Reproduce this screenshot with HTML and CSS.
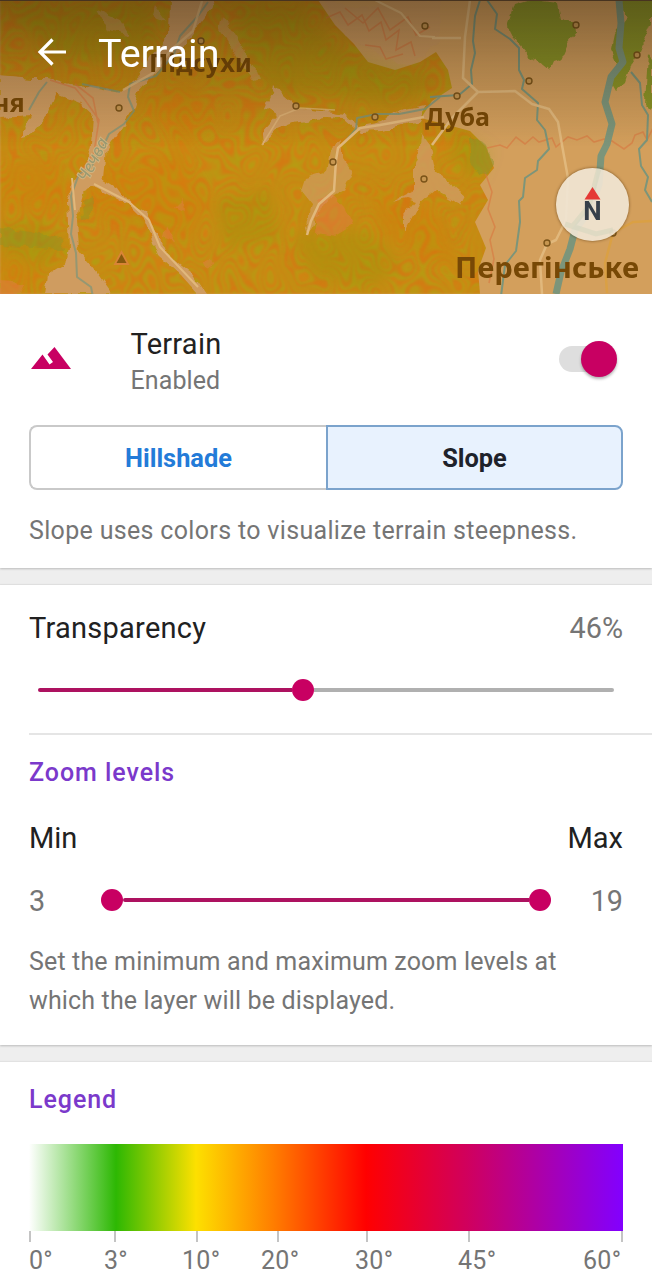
FILE: index.html
```html
<!DOCTYPE html>
<html lang="en">
<head>
<meta charset="utf-8">
<title>Terrain</title>
<link rel="stylesheet" href="styles.css">
</head>
<body>
<header class="map">
  <svg class="map-art" viewBox="0 0 652 294" width="652" height="294">
    <defs>
      <filter id="contours" x="0" y="0" width="652" height="294" filterUnits="userSpaceOnUse" color-interpolation-filters="sRGB">
        <feTurbulence type="fractalNoise" baseFrequency="0.023 0.017" numOctaves="2" seed="14"/>
        <feColorMatrix values="1 0 0 0 0  1 0 0 0 0  0 0 0 0 .07  0 0 0 0 1"/>
        <feComponentTransfer>
          <feFuncR type="table" tableValues=".72 .84 .72 .84 .71 .84 .72 .84 .70 .84 .72 .84 .71 .84 .72 .85 .70 .84 .71 .84 .72 .84 .71 .84 .72 .84 .72 .84 .70 .84 .72 .84 .71 .84 .72 .84 .72 .84 .72 .84 .72"/>
          <feFuncG type="table" tableValues=".61 .47 .61 .47 .62 .49 .61 .46 .62 .49 .61 .48 .62 .50 .61 .46 .62 .49 .62 .47 .61 .49 .62 .47 .61 .49 .61 .47 .62 .46 .61 .49 .62 .47 .61 .49 .61 .47 .61 .48 .61"/>
        </feComponentTransfer>
        <feGaussianBlur stdDeviation=".9"/>
        <feComposite in2="SourceGraphic" operator="in"/>
      </filter>
      <filter id="soft" x="-10%" y="-10%" width="120%" height="120%"><feGaussianBlur stdDeviation="7"/></filter>
      <filter id="edge" x="0" y="0" width="652" height="294" filterUnits="userSpaceOnUse">
        <feTurbulence type="fractalNoise" baseFrequency=".09" numOctaves="2" seed="3"/>
        <feDisplacementMap in="SourceGraphic" scale="9" xChannelSelector="R" yChannelSelector="G"/>
        <feGaussianBlur stdDeviation=".7"/>
      </filter>
      <linearGradient id="shade" x1="0" y1="0" x2="0" y2="1">
        <stop offset="0" stop-color="#201408" stop-opacity=".44"/>
        <stop offset=".22" stop-color="#201408" stop-opacity=".22"/>
        <stop offset=".5" stop-color="#201408" stop-opacity="0"/>
      </linearGradient>
    </defs>

    <rect width="652" height="294" fill="#d39f5c"/>

    <!-- slopes -->
    <path filter="url(#contours)" d="M0 0H318L335 25 354 44 368 62 395 70 420 62 436 52 448 70 452 88 432 101 421 118 448 125 470 131 486 147 494 168 480 185 488 200 475 222 486 248 478 270 480 294H0Z"/>
    <g filter="url(#soft)">
      <path d="M235 5L300 10 345 55 420 70 440 85 390 105 330 95 270 90 245 60ZM10 10L150 5 155 45 110 65 50 55ZM0 225L40 220 65 250 45 270 0 255ZM290 235L370 230 400 265 370 290 310 275ZM455 130L492 150 480 180 450 160ZM215 200L270 190 280 240 225 250Z" fill="#7f9a10" opacity=".22"/>
      <path d="M0 45L60 68 120 70 150 50 135 75 50 72ZM100 165L180 150 210 200 190 240 120 225 80 210ZM140 100L190 80 220 120 180 145ZM0 165L60 160 70 190 60 215 0 205ZM0 255L50 270 30 290 0 290ZM370 185L440 215 460 270 430 260 380 235Z" fill="#dd6d05" opacity=".2"/>
    </g>

    <!-- valleys and clearings -->
    <g filter="url(#edge)" fill="#cf9c61">
      <path d="M170 0H214L205 18 180 50 160 68 138 93 132 112 120 130 106 149 103 178 118 188 127 201 145 211 157 232 166 253 190 272 205 294 198 294 180 274 158 255 145 221 130 206 110 195 93 186 82 191 77 220 79 250 95 270 112 294H45L48 275 66 264 69 248 67 200 75 180 88 161 92 145 94 116 80 103 57 94 48 115 30 135 22 137 30 116 0 118V75L32 78 50 78 70 84 94 87 120 92 140 75 152 56 169 35Z"/>
      <path d="M425 105L400 110 382 122 360 126 345 115 320 111 298 108 282 94 273 83 271 94 265 108 277 115 261 133 262 145 276 130 293 123 325 118 345 119 360 132 382 131 400 126 421 122Z"/>
      <path d="M330 150L342 140 342 160 352 175 345 190 325 202 313 225 307 235 305 228 312 205 300 190 304 178 326 172Z" opacity=".7"/>
      <path d="M421 133L430 145 436 172 447 180 465 195 460 205 435 190 420 202 405 231 405 215 416 201 407 198 390 202 414 190 414 163 420 147Z" opacity=".8"/>
      <path d="M222 15L238 38 252 64 262 80 255 82 238 61 228 44 219 30ZM97 10L120 20 128 34 108 30ZM155 5L166 20 152 15Z" opacity=".6"/>
      <path d="M322 0L365 8 400 0 440 0 440 40 425 55 405 67 375 52 350 40Z" opacity=".5"/>
    </g>
    <g fill="#e27d42" opacity=".5" filter="url(#edge)">
      <path d="M318 200L332 193 345 207 354 225 336 236 315 233ZM166 225L174 243 164 239ZM175 208L183 200 184 212ZM203 262L212 258 214 265 205 269ZM0 282L24 284 20 294 0 294Z"/>
    </g>
    <g fill="none" stroke="#d9773f" stroke-width="1.6" opacity=".6">
      <path d="M326 18l14-6 8 13 14-10 7 16 12-9 5 18 13-10-3 20 15-8 4 14M345 8l18 15 15-15 12 22 18-13 8 18 14-8M365 45l15 2 6 12 17-5"/>
      <path d="M487 148l13-3 7 3 9-11 9 7 8-7 6 5 13-4 4 9 12-10 9 3 10-4 7 6 10-3 8 2 12 8 8-6 3-8 8-3 4 8 6-12 9 3 5 7 6-6"/>
      <path d="M485 172l7 20-4 17 7 18-5 13 4 19-5 24"/>
      <path d="M50 80l25 8 10 12 14 20-5 32-18 28M75 84l18 14 5 25"/>
    </g>

    <!-- woods -->
    <g filter="url(#edge)" fill="#8b9427">
      <path d="M514 4L527 0 558 4 561 18 575 22 576 33 568 44 562 58 553 61 549 70 538 61 528 55 520 45 512 35 507 25Z"/>
      <path d="M620 0H652V22L641 50 631 63 625 82 615 91 610 82 617 63 611 49 614 35 627 18ZM648 55L652 60V110L645 103Z"/>
      <path d="M470 138L483 142 494 162 491 171 480 177 472 160Z" opacity=".5"/>
      <path d="M82 201L96 195 95 210 83 220ZM0 228L30 232 63 240 65 250 35 246 0 245Z" opacity=".4"/>
    </g>

    <!-- rivers -->
    <g fill="none" stroke="#7c957a" stroke-width="2" stroke-linejoin="round">
      <path d="M619 0L621 23 619 48 623 62 611 77 605 102 612 124 607 144 601 156 599 184 590 210 575 230 570 249 561 272 556 294" stroke-width="7"/>
      <path d="M480 0l-5 16-2 25 2 12-4 17 1 14-13 11-29 2"/>
      <path d="M487 0l10 14-2 15 15 10 9 9v22l5 10-2 9 16 14-1 17 8 10 4 19-11 12-1 9-12 8-2 19-4 4 1 21-4 29-11 14-4 31-23 12"/>
      <path d="M631 72l9 11 2 22 6 10-1 25-8 9 2 17 7 11-3 13 7 12"/>
      <path d="M208 2l-10 14-18 20-6 18-18 22-26 8-2 13 6 14-10 13-15 10-8 17-10 16-12 7-8 22 2 20-2 18 5 19 1 24 14 10 2 10M120 92l-38-8M47 82l-8 10-10 18" opacity=".7"/>
      <path d="M440 97l-15 12-26 5-22 0-20 4-1 11-12 14" opacity=".8"/>
    </g>

    <!-- roads -->
    <g fill="none" stroke="#e1b87c" stroke-width="2.5" stroke-linejoin="round">
      <path d="M202 1L193 31 171 50 153 73 123 90" opacity=".8"/>
      <path d="M470 0L465 37 463 78 478 92 515 91 532 104 549 109 558 122 562 145 568 178 566 220 556 240 547 244 540 260 542 294M432 38L461 38M478 92L452 118 432 145"/>
      <path d="M262 145L280 116 300 108 335 110" stroke-width="1.500" opacity=".7"/>
      <path d="M424 117L380 125 360 128 338 148 336 160 334 191 319 204 311 221 307 235"/>
      <path d="M72 178L75 210M94 184l35 18 20 18 11 27 38 40" stroke-width="2"/>
      <path d="M375 0l26 13 19 23 15 1" stroke-width="2"/>
      <path d="M652 221l-19 1-20 11-8 30 2 30" stroke="#daa044"/>
    </g>

    <text class="river-name" x="87" y="183" transform="rotate(-62 87 183)">Чечва</text>
    <path d="M121.500 250l8 15h-16z" fill="#d98436"/>
    <path d="M121.500 254l5 9h-10z" fill="#87590c"/>

    <g fill="#c69650" stroke="#7b5419" stroke-width="1.400">
      <circle cx="119" cy="108" r="3"/><circle cx="201" cy="41" r="3"/><circle cx="296" cy="106" r="3"/><circle cx="375" cy="117" r="3"/>
      <circle cx="425" cy="26" r="3"/><circle cx="457" cy="96" r="3"/><circle cx="529" cy="81" r="3"/><circle cx="576" cy="25" r="3"/>
      <circle cx="637" cy="55" r="3"/><circle cx="333" cy="162" r="3"/><circle cx="424" cy="179" r="3"/><circle cx="547" cy="243" r="3"/><circle cx="613" cy="233" r="3"/>
    </g>
    <g class="town">
      <text x="-7" y="112" font-size="25">ня</text>
      <text x="149" y="72" font-size="25" textLength="103" lengthAdjust="spacingAndGlyphs">Підсухи</text>
      <text x="425" y="126" font-size="25" textLength="65" lengthAdjust="spacingAndGlyphs">Дуба</text>
      <text x="455" y="278" font-size="28.500" textLength="184" lengthAdjust="spacingAndGlyphs">Перегінське</text>
    </g>
    <rect width="652" height="294" fill="url(#shade)"/>
    <path d="M0 .5H652" stroke="#47331f"/>
  </svg>
  <div class="toolbar">
    <svg class="back" viewBox="0 0 30 28" width="30" height="28" fill="none" stroke="#fff" stroke-width="3.200"><path d="M29 14H3M15.500 1.500L3 14l12.500 12.500"/></svg>
    <h1 class="title">Terrain</h1>
  </div>
  <div class="compass">
    <svg viewBox="0 0 73 73" width="73" height="73">
      <path d="M43 0L33 38 15 60M9 56L40 66 57 62" fill="none" stroke="#cfd3bb" stroke-width="5" opacity=".45"/>
      <path d="M36.500 19l8 12.500h-16z" fill="#e53935"/>
    </svg>
    <span class="north">N</span>
  </div>
</header>

<main>
  <section class="card mode">
    <div class="switch-row">
      <svg class="hill" viewBox="0 0 40 22" width="40" height="22" fill="#c80062"><path d="M0 22L11.500 7.500 18.500 17.500 22 15 16.500 7.500 23.500 0 40 22Z"/></svg>
      <div class="labels">
        <div class="name">Terrain</div>
        <div class="state">Enabled</div>
      </div>
      <div class="switch"><span class="knob"></span></div>
    </div>
    <div class="segments">
      <button class="segment">Hillshade</button>
      <button class="segment selected">Slope</button>
    </div>
    <p class="hint">Slope uses colors to visualize terrain steepness.</p>
  </section>

  <section class="card">
    <div class="pair transparency"><span class="name">Transparency</span><span class="value">46%</span></div>
    <div class="slider"><span class="fill"></span><span class="thumb"></span><span class="rest"></span></div>
    <div class="divider"></div>
    <h2 class="heading zoom-heading">Zoom levels</h2>
    <div class="pair limits"><span>Min</span><span>Max</span></div>
    <div class="pair range-row">
      <span class="value low">3</span>
      <div class="range"><span class="thumb"></span><span class="fill"></span><span class="thumb"></span></div>
      <span class="value">19</span>
    </div>
    <p class="hint range-hint">Set the minimum and maximum zoom levels at<br>which the layer will be displayed.</p>
  </section>

  <section class="card legend">
    <h2 class="heading">Legend</h2>
    <div class="ramp"></div>
    <div class="ticks"><i></i><i></i><i></i><i></i><i></i><i></i><i></i></div>
    <div class="degrees"><span>0°</span><span>3°</span><span>10°</span><span>20°</span><span>30°</span><span>45°</span><span>60°</span></div>
  </section>
</main>
</body>
</html>
```
FILE: styles.css
```css
* { box-sizing: border-box; }
body { margin: 0; width: 652px; height: 1280px; overflow: hidden; background: #eee; color: #212121; font-family: Roboto, sans-serif; font-size: 29px; }
h1, h2, p { margin: 0; font-weight: 400; }

.map { position: relative; height: 294px; overflow: hidden; }
.map-art { display: block; }
.town { font-family: "Noto Sans", sans-serif; font-weight: 700; fill: #774805; }
.river-name { font: italic 17px "Noto Sans", sans-serif; fill: #9a9a72; stroke: #d2b37e; stroke-width: 2px; paint-order: stroke; }
.toolbar { position: absolute; inset: 0 0 auto; height: 104px; padding-left: 37px; display: flex; align-items: center; gap: 31px; }
.title { color: #fff; font-size: 39.5px; line-height: 46px; padding-top: 3px; }
.compass { position: absolute; left: 556px; top: 168px; width: 73px; height: 73px; border-radius: 50%; background: rgba(240, 229, 212, .92); box-shadow: 0 0 3px rgba(60, 35, 5, .65); overflow: hidden; }
.north { position: absolute; left: 0; right: 0; top: 30px; text-align: center; font: 700 26px/26px Roboto, sans-serif; color: #37404a; }

.card { background: #fff; }
.mode { height: 274px; padding: 32px 29px 0; box-shadow: 0 1px 2px #bbb; }
.mode + .card { margin-top: 17px; height: 460px; box-shadow: 0 1px 2px #bbb, 0 -1px 1px #e2e2e2; }
.switch-row { display: flex; align-items: flex-start; height: 99px; }
.hill { margin: 21px 60px 0 1.5px; }
.labels { flex: 1; }
.name { line-height: 36px; letter-spacing: .25px; }
.state { margin-top: 1px; line-height: 36px; font-size: 25px; color: #757575; letter-spacing: .1px; }
.switch { display: flex; justify-content: flex-end; align-items: center; width: 58px; height: 26px; margin: 20px 6px 0 0; border-radius: 13px; background: #dedede; }
.knob { width: 36px; height: 36px; border-radius: 50%; background: #c80062; box-shadow: 0 2px 3px rgba(0, 0, 0, .3); flex: none; }
.segments { display: grid; grid-template-columns: 297px 297px; height: 65px; }
.segment { padding: 1px 0 0; border: 2px solid #c9c9c9; border-right: 0; border-radius: 8px 0 0 8px; background: #fff; color: #237bd8; font: 700 25.4px/36px Roboto, sans-serif; }
.segment.selected { border: 2px solid #7ba3cc; border-radius: 0 8px 8px 0; background: #e8f2fe; color: #1e222b; }
.hint { margin-top: 21px; color: #757575; font-size: 25px; line-height: 39px; letter-spacing: .33px; }

.pair { display: flex; justify-content: space-between; padding: 0 29px; line-height: 36px; }
.value { color: #757575; font-size: 28.8px; }
.transparency { padding-top: 25px; height: 94px; }
.slider { display: flex; align-items: center; height: 22px; padding: 0 38px; }
.slider .fill { width: 254px; }
.fill { height: 4px; border-radius: 2px 0 0 2px; background: #ad1260; }
.rest { flex: 1; height: 4px; border-radius: 0 2px 2px 0; background: #b0b0b0; }
.thumb { flex: none; width: 22px; height: 22px; border-radius: 50%; background: #c80062; }
.divider { height: 2px; margin: 32px 0 0 29px; background: #e5e5e5; }
.heading { color: #7b39cb; font-size: 25px; font-weight: 500; line-height: 36px; letter-spacing: .95px; }
.zoom-heading { padding: 20px 29px 0; }
.limits { padding-top: 29px; }
.range-row { align-items: flex-start; height: 63px; padding-top: 27px; }
.low { width: 72px; }
.range { display: flex; align-items: center; width: 450px; height: 22px; margin: 5.5px auto 0 0; }
.range .fill { flex: 1; }
.range-hint { margin: 23px 29px 0; letter-spacing: .15px; }

.legend { margin-top: 17px; height: 218px; padding: 20px 29px 0; box-shadow: 0 -1px 1px #e2e2e2; }
.ramp { height: 87px; margin-top: 26px; background: linear-gradient(90deg, #fff 0, #2db803 87px, #fde000 167px, #ff7a00 247px, #f00 337px, #d0005e 439px, #8200ff 594px); }
.ticks, .degrees { display: grid; }
.ticks { grid-template-columns: 85px 82px 81px 89px 102px 153px 2px; height: 11px; }
.ticks i { width: 2px; background: #c4c4c4; }
.degrees { grid-template-columns: 75px 78px 79px 94px 103px 125px 1fr; margin-top: 1px; color: #757575; font-size: 25px; line-height: 36px; letter-spacing: .3px; white-space: nowrap; }
```
